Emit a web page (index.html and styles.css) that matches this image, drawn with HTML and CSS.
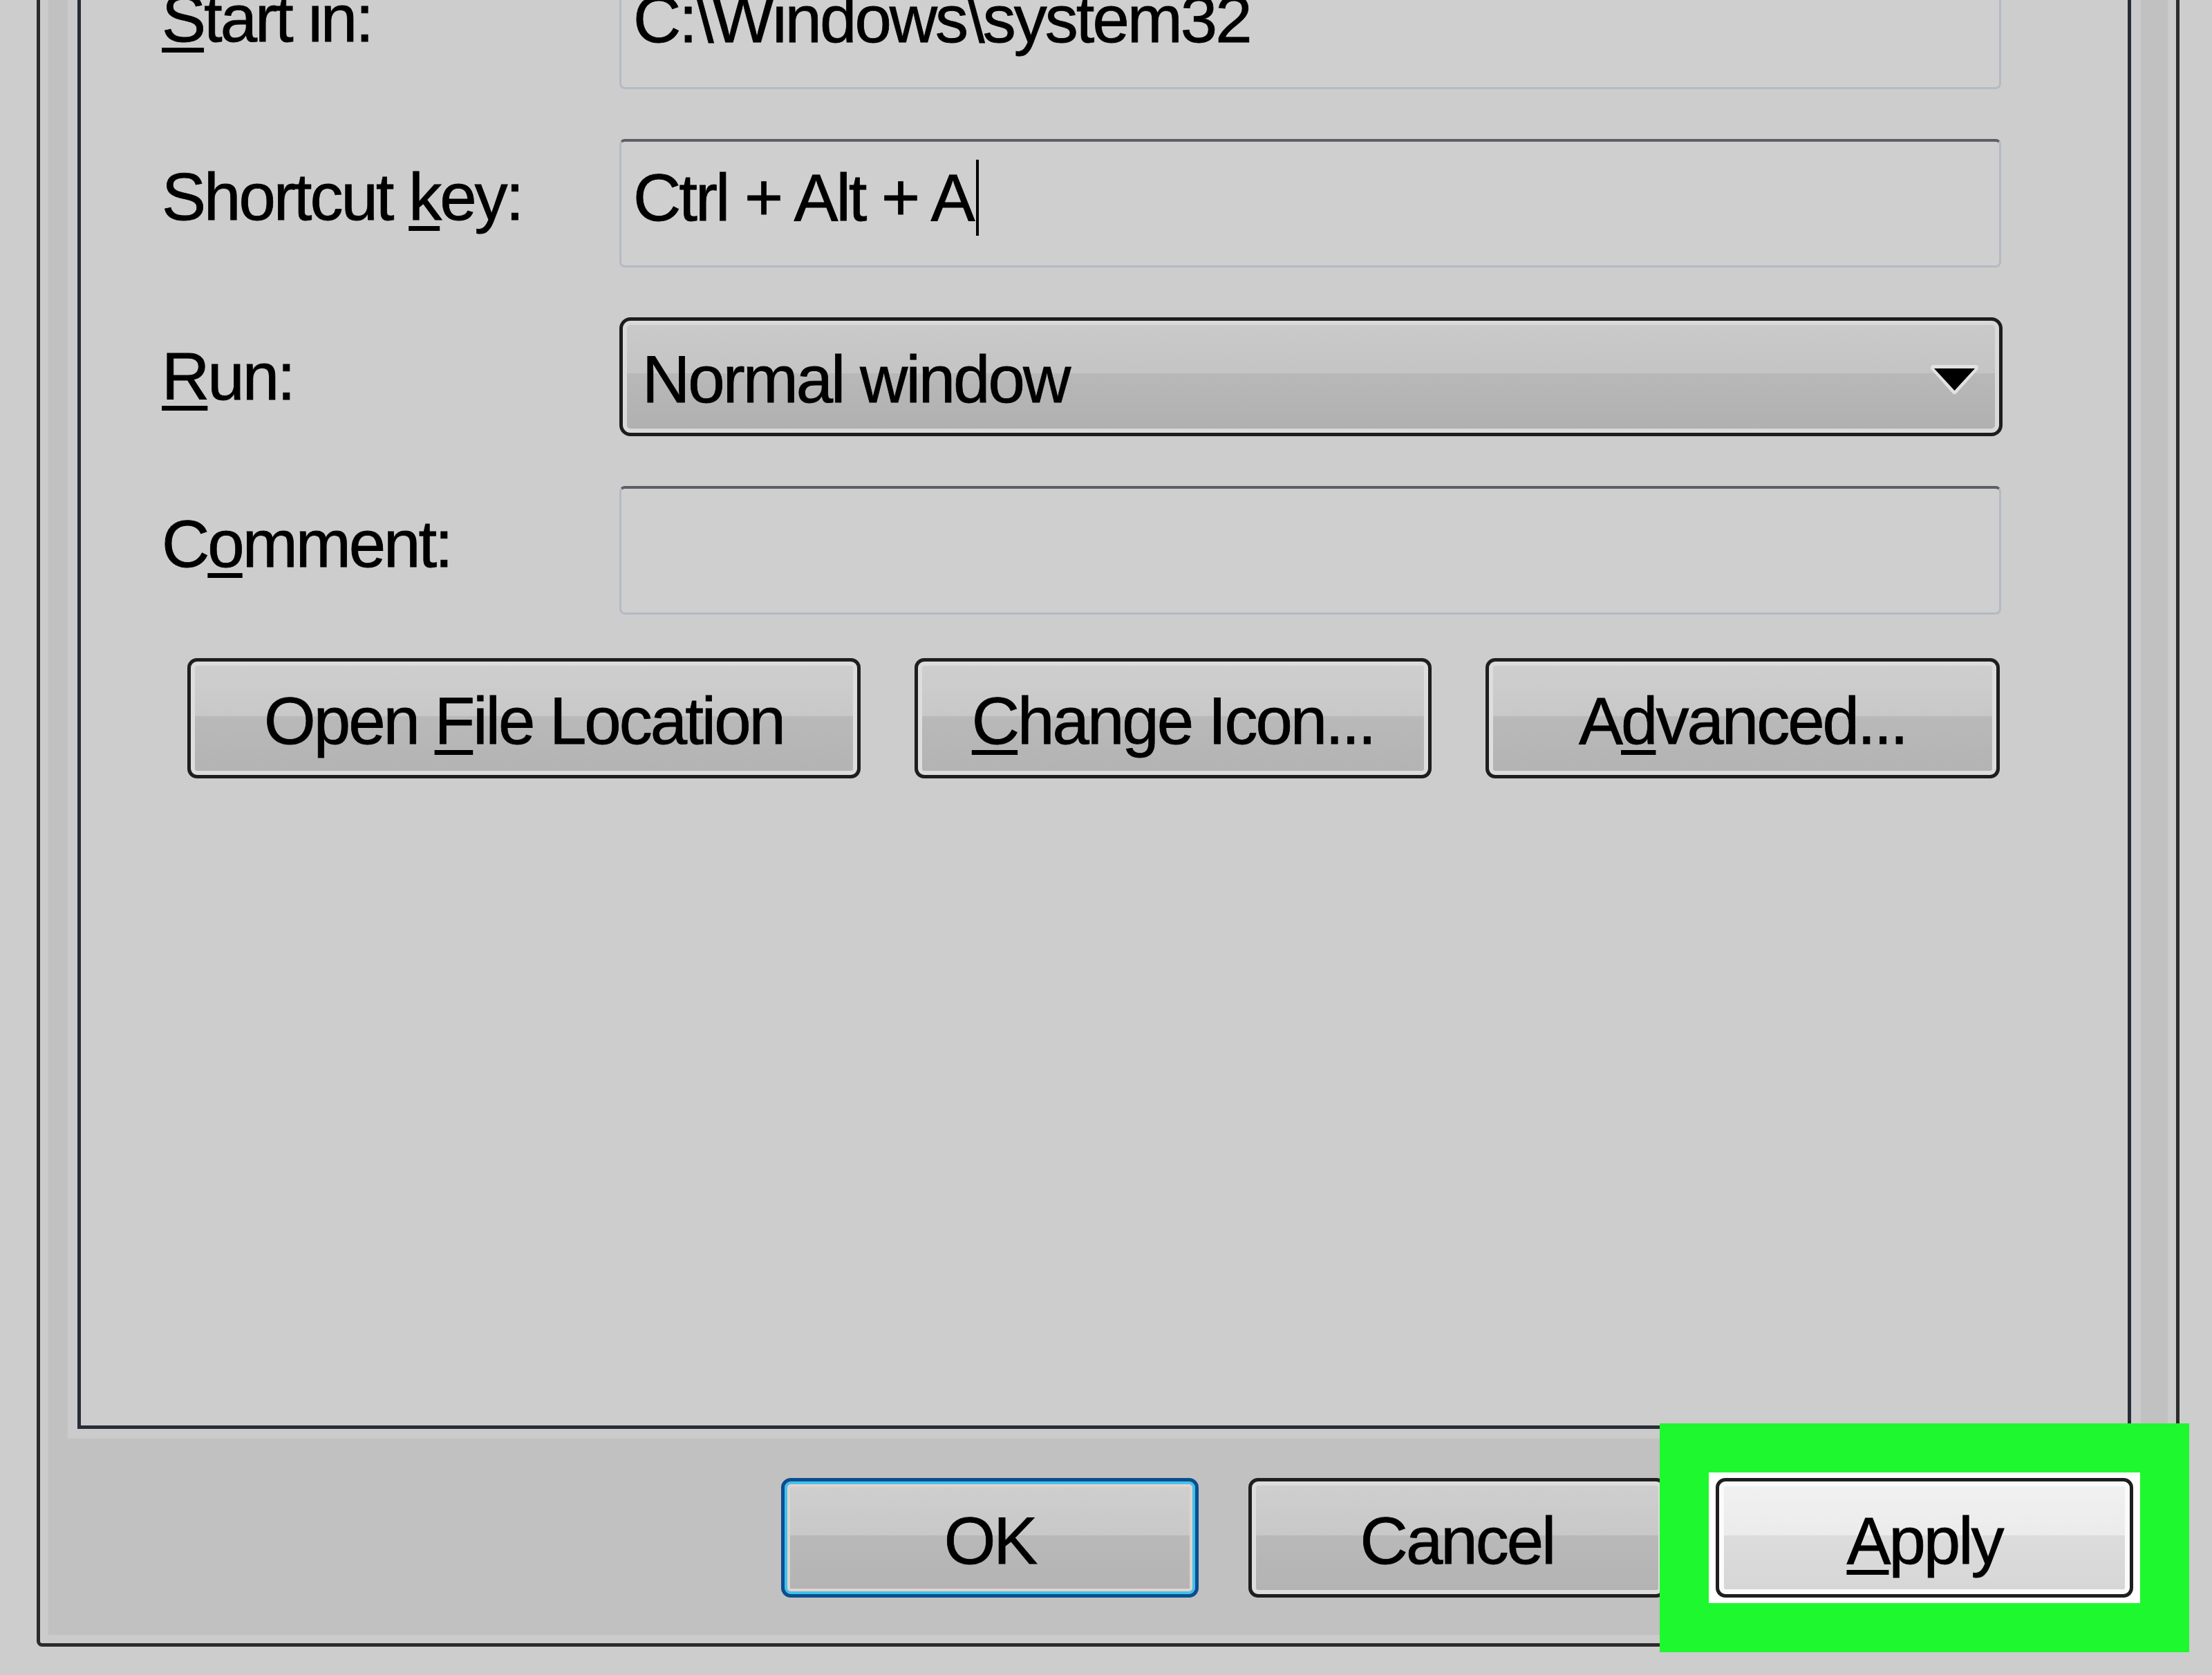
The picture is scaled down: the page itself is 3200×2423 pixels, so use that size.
FILE: index.html
```html
<!DOCTYPE html>
<html lang="en">
  <head>
    <meta charset="UTF-8" />
    <title>Shortcut Properties</title>
    <link rel="stylesheet" href="styles.css">
  </head>
  <body>
    <div class="dialog">
      <div class="panel">
        <div class="row">
          <label class="label"><u>S</u>tart in:</label>
          <div class="field">C:\Windows\system32</div>
        </div>
        <div class="row">
          <label class="label">Shortcut <u>k</u>ey:</label>
          <div class="field field-focus">Ctrl + Alt + A<span class="caret"></span></div>
        </div>
        <div class="row">
          <label class="label label-low"><u>R</u>un:</label>
          <div class="select">
            <span>Normal window</span>
            <svg class="arrow" width="61" height="34" viewBox="0 0 61 34">
              <polygon points="0,0 61,0 30.5,34" fill="#e2e2e2" stroke="#e2e2e2" stroke-width="8" stroke-linejoin="round" />
              <polygon points="1,1 60,1 30.5,33" fill="#000" />
            </svg>
          </div>
        </div>
        <div class="row">
          <label class="label">C<u>o</u>mment:</label>
          <div class="field field-focus"></div>
        </div>
        <div class="actions">
          <button class="btn btn-open">Open <u>F</u>ile Location</button>
          <button class="btn btn-icon"><u>C</u>hange Icon...</button>
          <button class="btn btn-adv">A<u>d</u>vanced...</button>
        </div>
      </div>

      <div class="footer">
        <button class="btn btn-ok">OK</button>
        <button class="btn">Cancel</button>
        <div class="highlight">
          <button class="btn btn-apply"><u>A</u>pply</button>
        </div>
      </div>
    </div>
  </body>
</html>
```

FILE: styles.css
```css
html,
body {
  height: 2423px;
  overflow: hidden;
}

body {
  margin: 0;
  background-color: #cdcdcd;
  font-family: "Liberation Sans", Arial, sans-serif;
  font-size: 96px;
  letter-spacing: -3px;
  color: #000;
  -webkit-text-stroke: 0.8px #000;
}

u {
  text-decoration-thickness: 7px;
  text-underline-offset: 9px;
}

.dialog {
  box-sizing: border-box;
  margin: -167px 47px 0 53px;
  padding: 40px 65px 0 54px;
  border: 5px solid #2b2b2b;
  border-radius: 0 0 8px 8px;
  background-color: #c1c1c1;
  box-shadow: inset 0 0 0 12px #cbcbcb;
}

.panel {
  display: flex;
  flex-direction: column;
  gap: 72px;
  padding: 60px 183px 936px 117px;
  border: 5px solid #272c3a;
  background-color: #cdcdcd;
  box-shadow: 0 0 0 14px #cbcbcb;
}

.row {
  display: flex;
  align-items: center;
}

.label {
  flex: none;
  width: 662px;
  padding-bottom: 18px;
}

.label-low {
  padding-bottom: 0;
}

.field {
  box-sizing: border-box;
  flex: none;
  width: 1999px;
  height: 186px;
  display: flex;
  align-items: center;
  padding: 0 0 18px 17px;
  border: 3px solid #b4bac5;
  border-top: 4px solid #9a9ea6;
  border-radius: 8px;
  background-color: #cfcfcf;
  white-space: pre;
}

.field-focus {
  border-top-color: #5c5f66;
}

.caret {
  display: inline-block;
  width: 4px;
  height: 110px;
  margin-left: 4px;
  background-color: #000;
  vertical-align: -16px;
}

.select {
  box-sizing: border-box;
  flex: none;
  width: 2001px;
  height: 172px;
  display: flex;
  align-items: center;
  justify-content: space-between;
  padding: 8px 34px 0 28px;
  border: 5px solid #1d1d1d;
  border-radius: 16px;
  background: linear-gradient(#cacaca, #c4c4c4 47%, #b8b8b8 47%, #b0b0b0);
  box-shadow: inset 0 0 0 6px #dadada;
}

.arrow {
  display: block;
  overflow: visible;
}

.btn {
  box-sizing: border-box;
  height: 174px;
  padding: 8px 0 0;
  border: 5px solid #1e1e1e;
  border-radius: 14px;
  background: linear-gradient(#cfcfcf, #c8c8c8 48%, #b9b9b9 48%, #b3b3b3);
  box-shadow: inset 0 0 0 6px #dddddd;
  font: inherit;
  letter-spacing: inherit;
  color: inherit;
  text-align: center;
  white-space: nowrap;
}

.actions {
  display: flex;
  gap: 78px;
  margin: -9px 0 0 37px;
}

.btn-open {
  width: 974px;
}

.btn-icon {
  width: 748px;
}

.btn-adv {
  width: 744px;
}

.footer {
  display: flex;
  justify-content: flex-end;
  align-items: center;
  gap: 72px;
  margin-right: -3px;
  padding: 71px 0 66px;
}

.footer .btn {
  width: 604px;
  height: 173px;
}

.btn-ok {
  border-color: #0b4e8e;
  box-shadow: inset 0 0 0 4px #3ec2ee, inset 0 0 0 8px #e3d2cd;
}

.highlight {
  position: relative;
  z-index: 1;
  margin: -8px -10px;
  padding: 8px 10px;
  background-color: #fff;
  box-shadow: 0 0 0 71px #1ef82e;
}

.btn-apply {
  display: block;
  background: linear-gradient(#f1f1f1, #ebebeb 48%, #dcdcdc 48%, #d6d6d6);
  box-shadow: inset 0 0 0 7px #fbfbfb;
}
```
